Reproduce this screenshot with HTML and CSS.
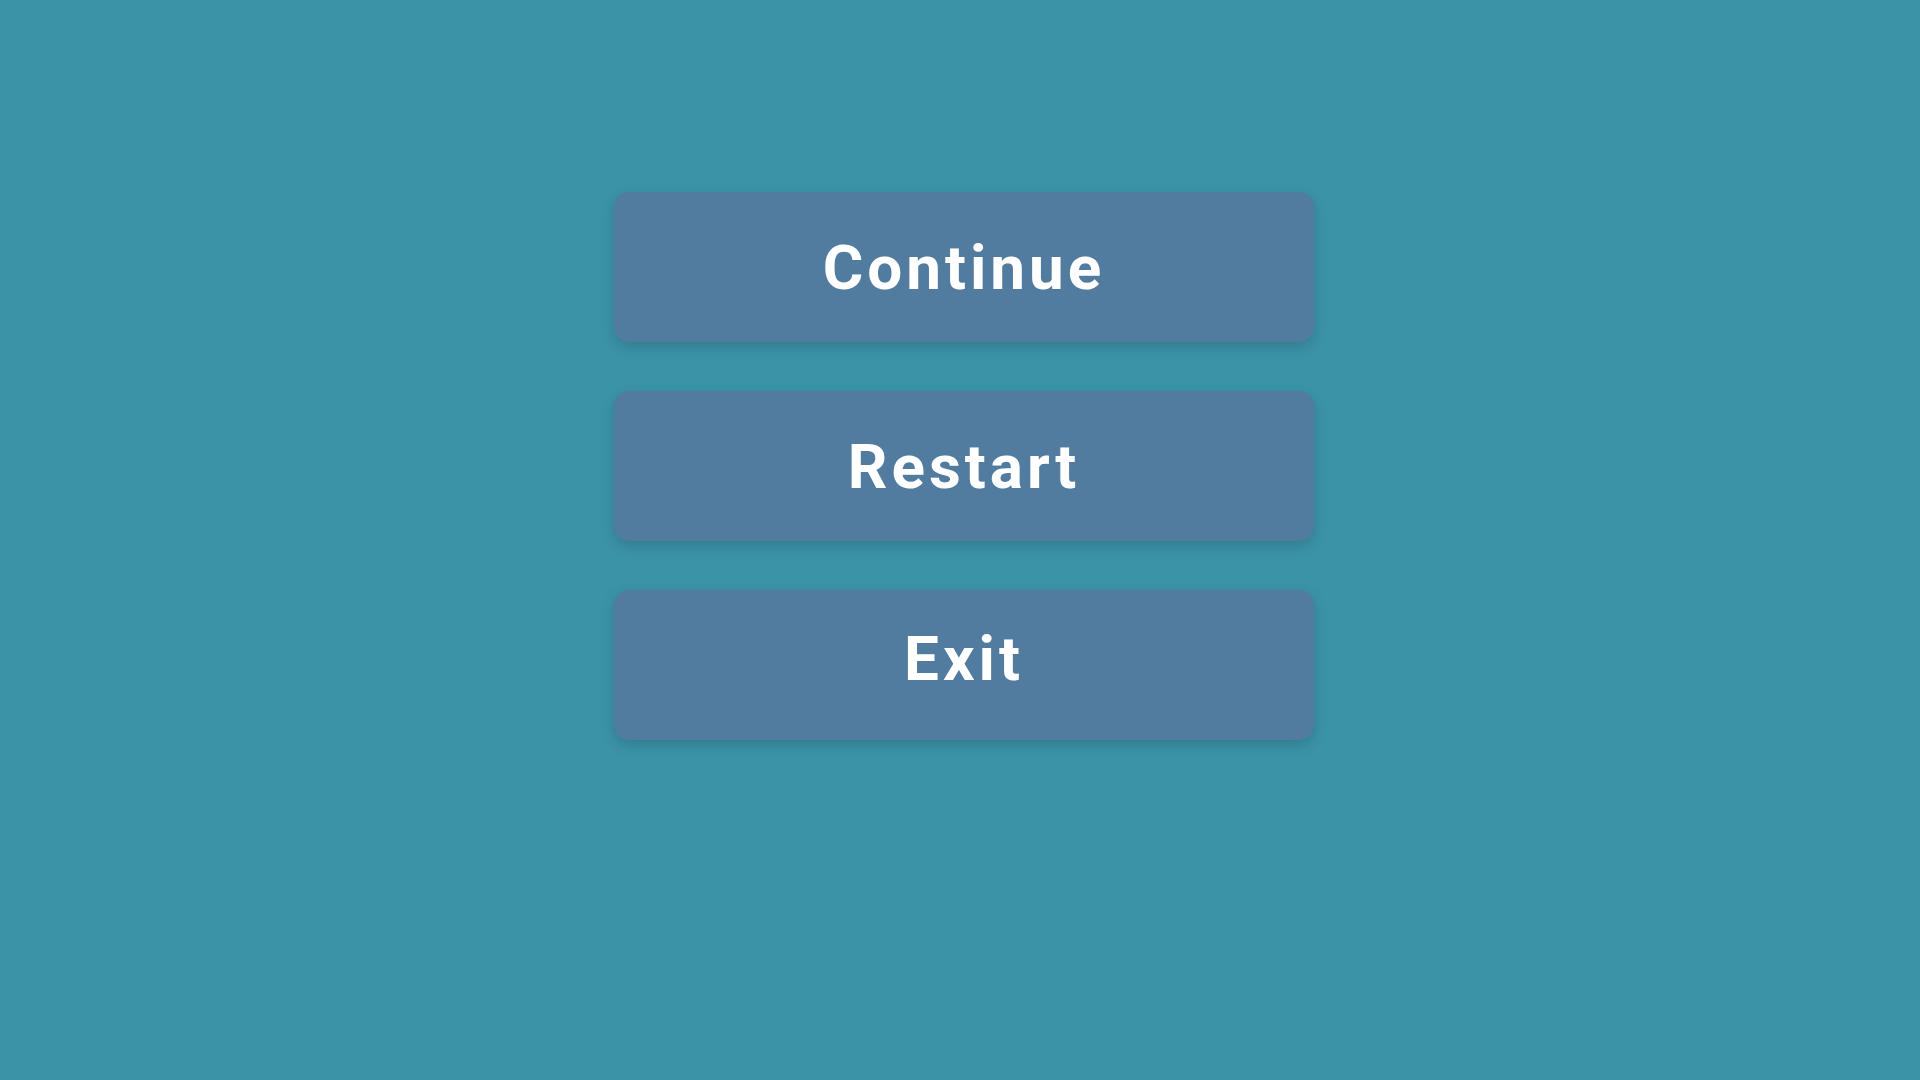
FILE: index.html
```html
<!DOCTYPE html>
<html lang="en">
<head>
<meta charset="utf-8">
<title>Menu</title>
<link rel="stylesheet" href="styles.css">
</head>
<body>
  <main class="menu">
    <button class="menu-btn">Continue</button>
    <button class="menu-btn">Restart</button>
    <button class="menu-btn menu-btn--raised">Exit</button>
  </main>
</body>
</html>
```

FILE: styles.css
```css
html, body {
  margin: 0;
  padding: 0;
  width: 100%;
  height: 100%;
}
body {
  background: #3b93a8;
  font-family: Roboto, "Liberation Sans", sans-serif;
}
.menu {
  display: flex;
  flex-direction: column;
  align-items: center;
  gap: 49px;
  padding-top: 192px;
  padding-left: 8px;
}
.menu-btn {
  width: 700px;
  height: 150px;
  border: none;
  border-radius: 15px;
  background: #517ca0;
  color: #ffffff;
  font-family: Roboto, "Liberation Sans", sans-serif;
  font-weight: 700;
  font-size: 62px;
  letter-spacing: 4px;
  box-shadow: 0 5px 14px rgba(0, 0, 0, 0.16);
  padding: 0;
  margin: 0;
  cursor: pointer;
}
.menu-btn--raised {
  padding-bottom: 13px;
}
```
